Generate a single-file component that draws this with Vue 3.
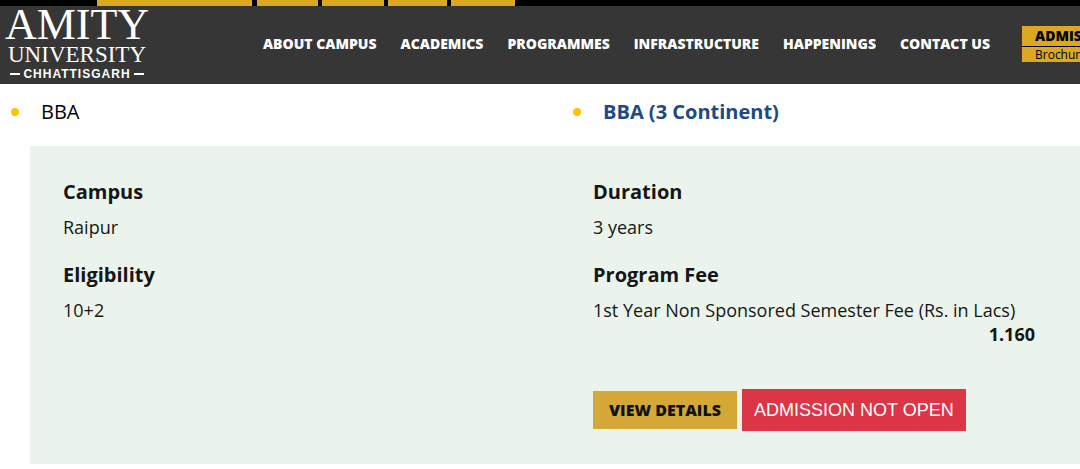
<script setup>
const tabs = [155, 61, 62, 59, 64]
const links = ['About Campus', 'Academics', 'Programmes', 'Infrastructure', 'Happenings', 'Contact Us']
</script>

<template>
  <div class="page">
    <div class="topbar">
      <span v-for="(w, i) in tabs" :key="i" class="tab" :style="{ width: w + 'px' }"></span>
    </div>
    <header class="header">
      <a class="logo" href="#">
        <span class="logo-name">AMITY</span>
        <span class="logo-sub">UNIVERSITY</span>
        <span class="logo-place">CHHATTISGARH</span>
      </a>
      <nav class="nav">
        <a v-for="link in links" :key="link" href="#">{{ link }}</a>
      </nav>
      <div class="cta">
        <a class="cta-main" href="#">ADMISSION</a>
        <a class="cta-sub" href="#">Brochure</a>
      </div>
    </header>

    <main>
      <ul class="programs">
        <li><a href="#">BBA</a></li>
        <li><a class="active" href="#">BBA (3 Continent)</a></li>
      </ul>

      <section class="panel">
        <div class="col">
          <h3>Campus</h3>
          <p>Raipur</p>
          <h3>Eligibility</h3>
          <p>10+2</p>
        </div>
        <div class="col">
          <h3>Duration</h3>
          <p>3 years</p>
          <h3>Program Fee</h3>
          <p>1st Year Non Sponsored Semester Fee (Rs. in Lacs)</p>
          <strong class="fee">1.160</strong>
          <div class="actions">
            <a class="details" href="#">VIEW DETAILS</a>
            <button class="closed" type="button">ADMISSION NOT OPEN</button>
          </div>
        </div>
      </section>
    </main>
  </div>
</template>

<style>
body {
  background: #fff;
  overflow-x: hidden;
}
</style>

<style scoped>
.page {
  font-family: "Open Sans", sans-serif;
  color: #161616;
}
a {
  text-decoration: none;
}
.topbar {
  display: flex;
  gap: 4px;
  height: 6px;
  padding-left: 97px;
  background: #000;
}
.tab {
  background: #daa821;
}
.tab:first-child {
  margin-right: 1px;
}
.header {
  display: flex;
  align-items: center;
  height: 76px;
  padding-bottom: 2px;
  background: #363636;
  overflow: hidden;
}
.logo {
  display: flex;
  flex: none;
  flex-direction: column;
  align-items: center;
  width: 142px;
  margin-left: 6px;
  color: #fff;
  font-family: "Liberation Serif", serif;
}
.logo-name {
  font-size: 44px;
  line-height: 36px;
}
.logo-sub {
  font-size: 23px;
  line-height: 24px;
}
.logo-place {
  display: flex;
  align-items: center;
  gap: 3px;
  font: bold 12px/14px "Liberation Sans", sans-serif;
  letter-spacing: 1px;
}
.logo-place::before,
.logo-place::after {
  content: "";
  width: 10px;
  height: 2px;
  background: #fff;
}
.nav {
  display: flex;
  flex: none;
  gap: 24px;
  margin-left: auto;
  color: #fff;
  font-size: 14px;
  font-weight: 800;
  line-height: 20px;
  text-transform: uppercase;
}
.nav a {
  color: inherit;
}
.cta {
  display: flex;
  flex: none;
  flex-direction: column;
  gap: 1px;
  width: 120px;
  margin: 0 -62px 0 32px;
  background: #000;
}
.cta a {
  padding-left: 13px;
  background: #daa821;
  color: #000;
}
.cta-main {
  font-size: 14px;
  font-weight: 800;
  line-height: 20px;
}
.cta-sub {
  font-size: 12px;
  line-height: 15px;
}
.programs {
  display: grid;
  grid-template-columns: 1fr 1fr;
  margin: 0 -44px 0 0;
  padding: 14px 0 20px;
  list-style: none;
  font-size: 20px;
  line-height: 28px;
}
.programs li {
  display: flex;
  align-items: center;
  gap: 22px;
  padding-left: 11px;
}
.programs li::before {
  content: "";
  width: 8px;
  height: 8px;
  border-radius: 50%;
  background: #ffc107;
}
.programs a {
  color: #000;
}
.programs .active {
  color: #1c4a84;
  font-weight: 700;
}
.panel {
  display: grid;
  grid-template-columns: 1fr 1fr;
  column-gap: 88px;
  margin-left: 30px;
  padding: 32px 45px 33px 33px;
  background: #eaf4ec;
}
h3 {
  margin: 0 0 8px;
  font-size: 20px;
  font-weight: 700;
  line-height: 28px;
}
p {
  margin: 0;
  font-size: 18px;
  line-height: 27px;
}
p + h3 {
  margin-top: 20px;
}
.fee {
  display: block;
  font-size: 18px;
  line-height: 20px;
  text-align: right;
}
.actions {
  display: flex;
  align-items: center;
  gap: 5px;
  margin-top: 45px;
}
.details {
  padding: 0 16px;
  background: #d4a836;
  color: #111;
  font-size: 16px;
  font-weight: 800;
  line-height: 38px;
}
.closed {
  padding: 0 12px;
  border: 0;
  background: #dc3545;
  color: #fff;
  font: 18px/42px "Liberation Sans", Arial, sans-serif;
}
</style>
